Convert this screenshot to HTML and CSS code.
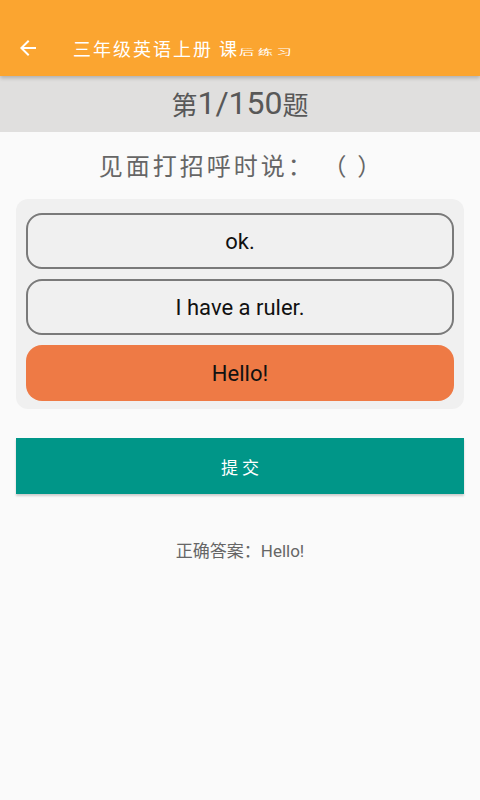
FILE: index.html
```html
<!DOCTYPE html>
<html lang="zh">
<head>
<meta charset="utf-8">
<link rel="stylesheet" href="styles.css">
</head>
<body>
<div class="appbar">
  <svg class="back" width="24" height="24" viewBox="0 0 24 24"><path d="M20 11H7.83l5.59-5.59L12 4l-8 8 8 8 1.41-1.41L7.83 13H20v-2z" fill="#fff"/></svg>
  <span class="title">三年级英语上册 课<span class="squash">后练习</span></span>
</div>
<div class="progress"><span class="cjk">第</span>1/150<span class="cjk">题</span></div>
<div class="question">见面打招呼时说：&thinsp;（&thinsp;）</div>
<div class="options">
  <div class="option">ok.</div>
  <div class="option">I have a ruler.</div>
  <div class="option selected">Hello!</div>
</div>
<div class="submit">提 交</div>
<div class="answer">正确答案：Hello!</div>
</body>
</html>
```
FILE: styles.css
```css
html, body { margin: 0; padding: 0; }
body {
  width: 480px;
  height: 800px;
  background: #fafafa;
  font-family: Roboto, "Noto Sans CJK SC", sans-serif;
  overflow: hidden;
}
.appbar {
  height: 76px;
  background: #fba530;
  display: flex;
  align-items: flex-end;
  padding: 0 0 15px 16px;
  box-sizing: border-box;
  box-shadow: 0 2px 4px rgba(0,0,0,0.22);
  position: relative;
  z-index: 2;
}
.back { margin-bottom: 1px; }
.title {
  color: #fff;
  font-family: "Noto Sans CJK SC", sans-serif;
  font-size: 18px;
  letter-spacing: 2px;
  margin-left: 33px;
  line-height: 26px;
  white-space: nowrap;
}
.squash {
  display: inline-block;
  line-height: 18px;
  letter-spacing: 4px;
  transform: scale(0.85, 0.42);
  transform-origin: left 85%;
}
.progress {
  height: 56px;
  background: #e0dfde;
  color: #585858;
  font-size: 32px;
  display: flex;
  align-items: center;
  justify-content: center;
  padding-bottom: 2px;
  box-sizing: border-box;
}
.progress .cjk {
  font-family: "Noto Sans CJK SC", sans-serif;
  font-size: 26px;
}
.question {
  text-align: center;
  color: #666;
  font-family: "Noto Sans CJK SC", sans-serif;
  font-size: 24px;
  letter-spacing: 3px;
  margin-top: 15px;
  line-height: 36px;
  padding-left: 3px;
}
.options {
  margin: 16px 16px 0;
  background: #f0f0f0;
  border-radius: 12px;
  padding: 14px 10px 8px;
  display: flex;
  flex-direction: column;
  gap: 10px;
}
.option {
  height: 56px;
  box-sizing: border-box;
  border: 2px solid #7a7a7a;
  border-radius: 16px;
  display: flex;
  align-items: center;
  justify-content: center;
  font-size: 22px;
  color: #111;
  background: #f0f0f0;
}
.option.selected {
  border: none;
  background: #ee7a45;
}
.submit {
  margin: 29px 16px 0;
  height: 56px;
  background: #009688;
  color: #fff;
  font-size: 17px;
  display: flex;
  align-items: center;
  justify-content: center;
  box-shadow: 0 2px 2px rgba(0,0,0,0.18);
}
.answer {
  text-align: center;
  color: #666;
  font-size: 17px;
  margin-top: 43px;
}
```
